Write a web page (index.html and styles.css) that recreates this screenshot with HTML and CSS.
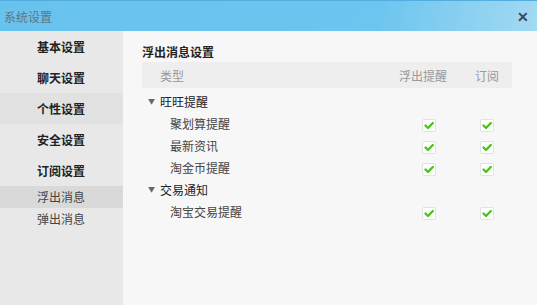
FILE: index.html
```html
<!DOCTYPE html>
<html lang="zh-CN">

<head>
    <meta charset="UTF-8" />
    <title>系统设置</title>
    <link rel="stylesheet" href="styles.css">
</head>

<body>
    <div class="ventana">
        <div class="titulo">
            <span>系统设置</span>
            <span class="cerrar">✕</span>
        </div>

        <div class="cuerpo">
            <div class="menu">
                <div class="item">基本设置</div>
                <div class="item">聊天设置</div>
                <div class="item activo">个性设置</div>
                <div class="item">安全设置</div>
                <div class="item">订阅设置</div>
                <div class="sub activo">浮出消息</div>
                <div class="sub">弹出消息</div>
            </div>

            <div class="contenido">
                <div class="encabezado">浮出消息设置</div>

                <div class="cabecera">
                    <span class="nombre">类型</span>
                    <span class="col1">浮出提醒</span>
                    <span class="col2">订阅</span>
                </div>

                <div class="fila grupo"><span class="flecha">▼</span>旺旺提醒</div>
                <div class="fila">
                    <span class="nombre hijo">聚划算提醒</span>
                    <span class="col1"><i class="check"></i></span>
                    <span class="col2"><i class="check"></i></span>
                </div>
                <div class="fila">
                    <span class="nombre hijo">最新资讯</span>
                    <span class="col1"><i class="check"></i></span>
                    <span class="col2"><i class="check"></i></span>
                </div>
                <div class="fila">
                    <span class="nombre hijo">淘金币提醒</span>
                    <span class="col1"><i class="check"></i></span>
                    <span class="col2"><i class="check"></i></span>
                </div>
                <div class="fila grupo"><span class="flecha">▼</span>交易通知</div>
                <div class="fila">
                    <span class="nombre hijo">淘宝交易提醒</span>
                    <span class="col1"><i class="check"></i></span>
                    <span class="col2"><i class="check"></i></span>
                </div>
            </div>
        </div>
    </div>
</body>

</html>
```

FILE: styles.css
```css
html,
body {
    margin: 0;
    padding: 0;
    overflow: hidden;
    font-family: "Noto Sans CJK SC", "Liberation Sans", sans-serif;
    font-size: 12px;
    color: #333;
}

.ventana {
    width: 537px;
    height: 305px;
    display: flex;
    flex-direction: column;
    background: #f7f7f7;
}

.titulo {
    height: 30px;
    border-top: 1px solid #52aede;
    background: linear-gradient(100deg, #68c2ee 0%, #6cc5ef 70%, #a3d9f3 100%);
    display: flex;
    align-items: center;
    justify-content: space-between;
    padding: 0 8px 0 4px;
    color: #5d7585;
}

.cerrar {
    font-size: 14px;
    font-weight: bold;
    color: #3d4a52;
}

.cuerpo {
    flex: 1;
    display: flex;
}

.menu {
    width: 123px;
    background: #e8e8e8;
}

.item {
    height: 31px;
    line-height: 31px;
    padding-left: 37px;
    font-weight: bold;
    color: #222;
}

.item.activo {
    background: #e1e1e1;
}

.sub {
    height: 22px;
    line-height: 22px;
    padding-left: 37px;
    color: #444;
}

.sub.activo {
    background: #d9d9d9;
}

.contenido {
    flex: 1;
    padding: 11px 25px 0 19px;
}

.encabezado {
    height: 20px;
    line-height: 20px;
    font-weight: bold;
    color: #222;
}

.cabecera {
    display: flex;
    align-items: center;
    height: 26px;
    background: #eeeeee;
    color: #999;
    margin-bottom: 2px;
}

.cabecera .nombre {
    padding-left: 18px;
}

.nombre {
    flex: 1;
}

.col1 {
    width: 58px;
    text-align: center;
    padding-right: 4px;
}

.col2 {
    width: 50px;
    text-align: center;
}

.cabecera .col1 {
    padding-right: 10px;
}

.fila {
    display: flex;
    align-items: center;
    height: 22px;
}

.grupo {
    padding-left: 6px;
    color: #222;
}

.flecha {
    font-size: 7px;
    color: #666;
    margin-right: 5px;
}

.hijo {
    padding-left: 28px;
    color: #444;
}

.check {
    display: inline-block;
    width: 12px;
    height: 11px;
    vertical-align: middle;
    background: #fff url("data:image/svg+xml,%3Csvg xmlns='http://www.w3.org/2000/svg' viewBox='0 0 12 11'%3E%3Cpath d='M2.5 5.5 L5 8 L9.8 3' fill='none' stroke='%234fc21a' stroke-width='2.4' stroke-linecap='round' stroke-linejoin='round'/%3E%3C/svg%3E") center / 12px 11px no-repeat;
    border: 1px solid #e2e2e2;
    border-radius: 2px;
}
```
